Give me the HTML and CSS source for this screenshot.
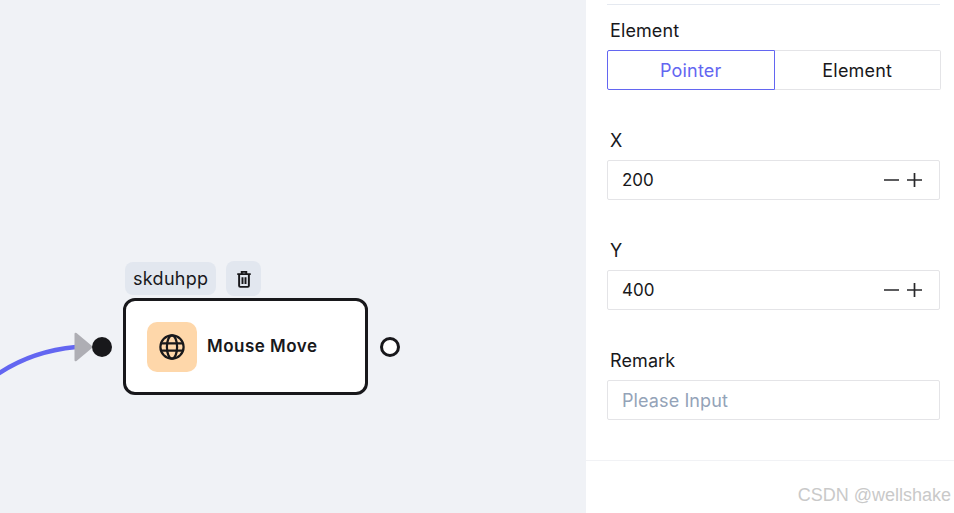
FILE: index.html
```html
<!DOCTYPE html>
<html lang="en">

<head>
    <meta charset="UTF-8">
    <title>Mouse Move</title>
    <link rel="stylesheet" href="styles.css">
</head>

<body>
    <div class="app">
        <!-- flow canvas -->
        <div class="canvas">
            <svg class="edge" width="100" height="60" viewBox="0 0 100 60">
                <path d="M-2 47C20 32 44 23 76 20" fill="none" stroke="#6366f1" stroke-width="4.500" />
                <path d="M74.500 7Q74.500 5 76.500 6L92 19Q93 20 92 21L76.500 34Q74.500 35 74.500 33Z" fill="#aeaeb4" />
            </svg>
            <span class="port port-in"></span>
            <div class="node-tools">
                <span class="node-tag">skduhpp</span>
                <button class="node-delete">
                    <svg width="18" height="18" viewBox="0 0 24 24" fill="none" stroke="#18181b" stroke-width="2.600">
                        <path d="M3 5.500h18M9 5V2.500h6V5M5.500 5.500V21a1.500 1.500 0 0 0 1.500 1.500h10a1.500 1.500 0 0 0 1.500-1.500V5.500M10 9.500v9M14 9.500v9" />
                    </svg>
                </button>
            </div>
            <div class="node">
                <div class="node-icon">
                    <svg width="26" height="26" viewBox="0 0 28 28" fill="none" stroke="#18181b" stroke-width="2.400">
                        <circle cx="14" cy="14" r="12.500" />
                        <path d="M2.500 10h23M2.500 18h23" />
                        <ellipse cx="14" cy="14" rx="5.500" ry="12.500" />
                    </svg>
                </div>
                <span class="node-title">Mouse Move</span>
            </div>
            <span class="port port-out"></span>
        </div>

        <!-- settings panel -->
        <div class="panel">
            <div class="panel-body">
                <div class="field">
                    <label class="field-label">Element</label>
                    <div class="toggle">
                        <div class="toggle-item active">Pointer</div>
                        <div class="toggle-item">Element</div>
                    </div>
                </div>
                <div class="field">
                    <label class="field-label">X</label>
                    <div class="input">
                        <span class="input-value">200</span>
                        <svg class="stepper" width="39" height="14" viewBox="0 0 39 14" stroke="#27272a" stroke-width="1.700">
                            <path d="M1 7h15M24 7h15M31.500 0v14" />
                        </svg>
                    </div>
                </div>
                <div class="field">
                    <label class="field-label">Y</label>
                    <div class="input">
                        <span class="input-value">400</span>
                        <svg class="stepper" width="39" height="14" viewBox="0 0 39 14" stroke="#27272a" stroke-width="1.700">
                            <path d="M1 7h15M24 7h15M31.500 0v14" />
                        </svg>
                    </div>
                </div>
                <div class="field">
                    <label class="field-label">Remark</label>
                    <div class="input">
                        <span class="input-placeholder">Please Input</span>
                    </div>
                </div>
            </div>
            <div class="panel-footer"></div>
        </div>
    </div>
    <div class="watermark">CSDN @wellshake</div>
</body>

</html>
```

FILE: styles.css
```css
body {
    margin: 0;
    font-family: 'Inter', 'Noto Sans', sans-serif;
    color: #18181b;
    overflow: hidden;
}

.app {
    display: flex;
    width: 954px;
    height: 513px;
}

/* canvas */
.canvas {
    position: relative;
    width: 586px;
    flex-shrink: 0;
    background-color: #f0f2f6;
}

.edge {
    position: absolute;
    left: 0;
    top: 327px;
    overflow: visible;
}

.port {
    position: absolute;
    box-sizing: border-box;
    border-radius: 50%;
}

.port-in {
    left: 92px;
    top: 337px;
    width: 20px;
    height: 20px;
    background-color: #18181b;
}

.port-out {
    left: 380px;
    top: 337px;
    width: 20px;
    height: 20px;
    background-color: #fff;
    border: 3px solid #18181b;
}

.node-tools {
    position: absolute;
    left: 125px;
    top: 261px;
    display: flex;
    align-items: center;
    gap: 10px;
}

.node-tag {
    height: 33px;
    line-height: 33px;
    padding: 0 8px;
    border-radius: 8px;
    background-color: #e2e7ef;
    font-size: 18px;
    letter-spacing: 0.3px;
}

.node-delete {
    display: flex;
    align-items: center;
    justify-content: center;
    width: 35px;
    height: 35px;
    padding: 0;
    border: none;
    border-radius: 8px;
    background-color: #e2e7ef;
}

.node {
    position: absolute;
    left: 123px;
    top: 298px;
    box-sizing: border-box;
    width: 245px;
    height: 97px;
    display: flex;
    align-items: center;
    gap: 10px;
    padding-left: 21px;
    background-color: #fff;
    border: 3px solid #18181b;
    border-radius: 12px;
}

.node-icon {
    width: 50px;
    height: 50px;
    display: flex;
    align-items: center;
    justify-content: center;
    border-radius: 10px;
    background-color: #fed7aa;
}

.node-title {
    padding-bottom: 2px;
    font-size: 17px;
    font-weight: 600;
    letter-spacing: 0.5px;
}

/* panel */
.panel {
    width: 368px;
    min-width: 0;
    display: flex;
    flex-direction: column;
    background-color: #fff;
}

.panel-body {
    flex: 1;
    margin: 4px 14px 0 21px;
    padding-top: 15px;
    border-top: 1px solid #e5e9f0;
}

.field {
    margin-bottom: 40px;
}

.field-label {
    display: block;
    height: 20px;
    line-height: 22px;
    margin: 0 0 10px 3px;
    font-size: 18px;
    letter-spacing: 0.1px;
}

.toggle {
    display: flex;
    width: 334px;
    height: 40px;
}

.toggle-item {
    box-sizing: border-box;
    width: 50%;
    line-height: 40px;
    text-align: center;
    font-size: 18px;
    letter-spacing: 0.2px;
    border: 1px solid #e4e4e7;
    border-left: none;
    border-radius: 0 2px 2px 0;
}

.toggle-item.active {
    width: 168px;
    color: #6366f1;
    border: 1px solid #6366f1;
    border-radius: 2px 0 0 2px;
}

.input {
    box-sizing: border-box;
    display: flex;
    align-items: center;
    justify-content: space-between;
    height: 40px;
    padding: 0 17px 0 14px;
    border: 1px solid #e4e4e7;
    border-radius: 2px;
    font-size: 17px;
}

.stepper {
    flex-shrink: 0;
}

.input-placeholder {
    color: #94a3b8;
    font-size: 18px;
    letter-spacing: 0.1px;
}

.panel-footer {
    height: 52px;
    border-top: 1px solid #f1f2f5;
}

/* csdn mark */
.watermark {
    position: absolute;
    right: 3px;
    top: 485px;
    font-family: 'Liberation Sans', sans-serif;
    font-size: 18px;
    color: #c9c9c9;
}
```
